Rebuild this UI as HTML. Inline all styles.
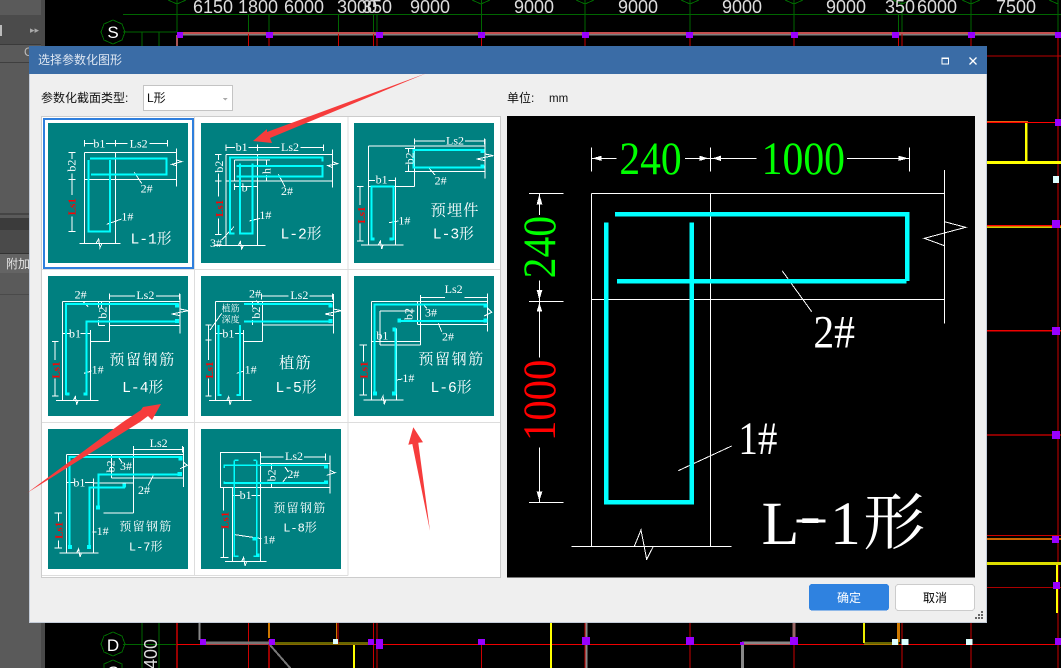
<!DOCTYPE html>
<html><head><meta charset="utf-8"><style>
html,body{margin:0;padding:0;background:#000;width:1061px;height:668px;overflow:hidden}
svg{display:block;position:absolute;left:0;top:0}
text{font-family:"Liberation Sans","Noto Sans CJK SC",sans-serif}
.w{stroke:#fff;stroke-width:3;fill:none}
.c{stroke:#0ff;stroke-width:6;fill:none}
.f{fill:#0ff}
.t{font-family:"Liberation Serif","Noto Serif CJK SC",serif;font-size:36px;fill:#fff;text-anchor:middle}
.r{font-family:"Liberation Serif",serif;font-size:33px;fill:#f00;text-anchor:middle;font-weight:bold}
.n{font-family:"Liberation Mono","Noto Serif CJK SC",monospace;font-size:44px;fill:#fff;text-anchor:middle}
.z{font-family:"Liberation Serif","Noto Serif CJK SC",serif;fill:#fff;text-anchor:middle}
.d{font-size:18px;fill:#ddd}
text.s{font-family:"Liberation Serif","Noto Serif CJK SC",serif;font-size:140px}
</style></head><body>
<svg width="1061" height="668" viewBox="0 0 1061 668" xmlns="http://www.w3.org/2000/svg" shape-rendering="crispEdges">
<!-- background -->
<rect width="1061" height="668" fill="#000"/>
<rect width="41" height="668" fill="#5a5a5a"/>
<rect x="41" width="4" height="668" fill="#4a4a4a"/>
<rect y="15" width="41" height="29" fill="#4b4b4b"/>
<rect y="44" width="41" height="1" fill="#3a3a3a"/>
<rect y="25" width="2" height="11" fill="#bbb"/>
<rect y="62" width="41" height="1" fill="#3f3f3f"/>
<text x="30" y="33" font-size="9" fill="#aaa">▸▸</text>
<text x="24" y="56" font-size="12" fill="#bbb">C</text>
<rect y="213" width="30" height="2" fill="#444"/>
<rect y="218" width="30" height="12" fill="#3b3b3b"/>
<rect y="230" width="30" height="23" fill="#4a4a4a"/>
<rect y="253" width="30" height="1" fill="#333"/>
<rect y="254" width="30" height="19" fill="#646464"/>
<rect y="294" width="30" height="1" fill="#4a4a4a"/>
<text x="6" y="268" font-size="12" fill="#e4e4e4">附加</text>

<!-- top dims -->
<path d="M123 14.5H1061" stroke="#060" stroke-width="1"/>
<path d="M177 0V32M248.500 14V32M269 14V32M338.500 14V32M373.500 14V32M377 14V32M481.500 0V32M585 0V32M690 0V32M794 0V32M898.500 14V32M902 0V32M971 0V32M1058 0V32" stroke="#060" stroke-width="1"/>
<path d="M168 0L177 4L186 0M472 0L481 4L490 0M576 0L585 4L594 0M681 0L690 4L699 0M785 0L794 4L803 0M893 0L902 4L911 0M962 0L971 4L980 0M1049 0L1058 4" stroke="#060" fill="none"/>
<g class="d">
<text x="193" y="13">6150</text><text x="238" y="13">1800</text><text x="284" y="13">6000</text><text x="337" y="13">3000</text><text x="362" y="13">350</text><text x="410" y="13">9000</text><text x="514" y="13">9000</text><text x="618" y="13">9000</text><text x="722" y="13">9000</text><text x="826" y="13">9000</text><text x="885" y="13">350</text><text x="917" y="13">6000</text><text x="996" y="13">7500</text>
</g>
<path d="M123 32H177M142 32V46M159 32V46" stroke="#060" stroke-width="1"/>
<path d="M113 20L122 24L125 32L122 40L113 44L104 40L101 32L104 24Z" stroke="#060" fill="none"/>
<text x="113" y="38" font-size="17" fill="#fff" text-anchor="middle">S</text>
<rect x="177" y="32" width="884" height="2" fill="#c25050"/>
<rect x="177" y="34" width="884" height="1.500" fill="#808080"/>
<rect x="176" y="35" width="2" height="11" fill="#a55"/>
<path d="M248.500 34V46M269 34V46M338.500 34V46M373.500 34V46M377 34V46M481.500 34V46M585 34V46M690 34V46M794 34V46M898.500 34V46M902 34V46M971 34V46M1058 34V668" stroke="#c00" stroke-width="1"/>
<g fill="#90f"><rect x="177" y="32" width="6" height="6"/><rect x="266" y="32" width="7" height="6"/><rect x="376" y="32" width="7" height="6"/><rect x="478" y="32" width="7" height="6"/><rect x="582" y="32" width="7" height="6"/><rect x="686" y="32" width="7" height="6"/><rect x="791" y="32" width="7" height="6"/><rect x="892" y="32" width="7" height="6"/><rect x="968" y="32" width="7" height="6"/><rect x="1055" y="32" width="6" height="6"/></g>

<!-- right side -->
<g>
<rect x="987" y="55.500" width="74" height="1" fill="#b00"/>
<rect x="987" y="121" width="41" height="2" fill="#e5600a"/><rect x="987" y="122" width="74" height="1" fill="#f00"/>
<rect x="1025" y="123" width="2" height="39" fill="#ff0"/><rect x="1027" y="123" width="1" height="39" fill="#770"/>
<rect x="987" y="161" width="74" height="3" fill="#ff0"/>
<rect x="1053" y="176" width="6" height="7" fill="#dff"/>
<rect x="987" y="225" width="74" height="1" fill="#f00"/><rect x="987" y="226" width="74" height="1" fill="#e08000"/><rect x="987" y="227" width="74" height="1" fill="#cc0"/>
<rect x="987" y="330" width="74" height="1.500" fill="#e00"/>
<rect x="987" y="434" width="74" height="2" fill="#800"/>
<rect x="987" y="535" width="74" height="1" fill="#c00"/><rect x="987" y="538" width="74" height="2" fill="#c60"/>
<rect x="987" y="562" width="74" height="3" fill="#dd0"/>
<rect x="1056" y="565" width="2" height="48" fill="#ff0"/>
<rect x="987" y="587" width="74" height="1" fill="#a00"/>
<g fill="#90f"><rect x="1055" y="119" width="6" height="7"/><rect x="1052" y="220" width="8" height="8"/><rect x="1052" y="327" width="8" height="8"/><rect x="1052" y="431" width="8" height="8"/><rect x="1052" y="536" width="7" height="7"/><rect x="1053" y="582" width="7" height="7"/></g>
</g>

<!-- bottom -->
<g>
<path d="M142 622V668M159 622V668M123 644.500H177" stroke="#060" stroke-width="1"/>
<path d="M177 622V668" stroke="#900" stroke-width="2"/>
<path d="M248.500 622V668M373.500 622V668M377 622V668M481.500 644V668M585 622V668M690 622V668M794 644V668M902 622V668M971 622V668" stroke="#c00" stroke-width="1"/>
<path d="M177 644.500H1061" stroke="#e00" stroke-width="1"/>
<path d="M269 640V668" stroke="#900" stroke-width="2"/><path d="M269 622V638" stroke="#c70" stroke-width="2"/>
<path d="M199.500 622V640" stroke="#888" stroke-width="2"/>
<path d="M203 643H269" stroke="#777" stroke-width="3"/>
<path d="M270 645L291 669" stroke="#777" stroke-width="2"/>
<path d="M270 643H368" stroke="#cc0" stroke-width="1"/><path d="M270 644.500H368" stroke="#860" stroke-width="1"/>
<path d="M338 622V644" stroke="#e00" stroke-width="1"/><path d="M336.500 622V640" stroke="#c70" stroke-width="1"/>
<rect x="353" y="645" width="2" height="23" fill="#ff0"/>
<rect x="550" y="622" width="2" height="46" fill="#ff0"/>
<path d="M586.500 622V668" stroke="#888" stroke-width="2"/>
<path d="M742 643H794" stroke="#888" stroke-width="3"/>
<rect x="741" y="644" width="3" height="24" fill="#888"/>
<path d="M794 622V640" stroke="#966" stroke-width="3"/>
<rect x="863" y="622" width="2" height="21" fill="#ee0"/>
<path d="M864 643H899" stroke="#cc0" stroke-width="1"/><path d="M864 644.500H899" stroke="#a70" stroke-width="1"/>
<rect x="897" y="622" width="3" height="20" fill="#c70"/>
<g fill="#dff"><rect x="333" y="639" width="5" height="5"/><rect x="892" y="639" width="6" height="6"/><rect x="901.500" y="639" width="7" height="6"/><rect x="966" y="639" width="6.500" height="6"/></g>
<g fill="#90f"><rect x="200" y="639" width="6" height="6"/><rect x="269" y="639" width="6" height="6"/><rect x="368" y="639" width="6" height="6"/><rect x="376" y="639" width="7" height="10"/><rect x="478" y="639" width="7" height="6"/><rect x="582" y="637" width="8" height="8"/><rect x="686" y="637" width="8" height="8"/><rect x="740" y="642" width="4" height="3"/><rect x="790" y="637" width="8" height="8"/><rect x="1055" y="638" width="6" height="7"/></g>
<path d="M113 632L122 636L125 644L122 652L113 656L104 652L101 644L104 636Z" stroke="#060" fill="none"/>
<text x="113" y="651" font-size="17" fill="#fff" text-anchor="middle">D</text>
<path d="M104 668L104 664L113 660L122 664V668" stroke="#060" fill="none"/>
<text x="113" y="678" font-size="17" fill="#fff" text-anchor="middle">C</text>
<text transform="translate(157,639) rotate(-90)" font-size="18" fill="#ddd" text-anchor="end">9400</text>
</g>

<!-- dialog -->
<rect x="29" y="46" width="958" height="577" fill="#c4ccd8"/>
<rect x="30" y="46" width="956" height="576" fill="#efefef"/>
<rect x="29" y="46" width="958" height="28" fill="#3a6ca6"/>
<text x="38" y="64" font-size="12" fill="#dfe7f2">选择参数化图形</text>
<rect x="942" y="58" width="6.500" height="6" fill="none" stroke="#fff" stroke-width="1"/><rect x="942" y="57.500" width="7" height="1.500" fill="#fff"/>
<path d="M969.500 57.500L976.500 64.500M976.500 57.500L969.500 64.500" stroke="#fff" stroke-width="1.300" shape-rendering="auto"/>

<text x="41" y="102" font-size="12" fill="#111">参数化截面类型:</text>
<rect x="143.500" y="85.500" width="89" height="25" fill="#fff" stroke="#c4c4c4" stroke-width="1"/>
<text x="147" y="102" font-size="12" fill="#111">L形</text>
<path d="M222.500 98H227.500L225 100.500Z" fill="#aaa"/>
<text x="507" y="102" font-size="12" fill="#111">单位:</text>
<text x="549" y="102" font-size="11.500" fill="#111">mm</text>

<!-- grid -->
<rect x="41.500" y="116.500" width="459" height="461" fill="#fff" stroke="#ccc"/>
<path d="M194.500 117V575.500M348 117V575.500M42 269.500H500M42 422.500H500M42 575.500H348" stroke="#ddd" stroke-width="1"/>
<rect x="44" y="119" width="149" height="149" fill="none" stroke="#2f7fdd" stroke-width="2"/>
<g fill="#008080">
<rect x="48" y="123" width="140" height="140"/><rect x="201" y="123" width="140" height="140"/><rect x="354" y="123" width="140" height="140"/>
<rect x="48" y="276" width="140" height="140"/><rect x="201" y="276" width="140" height="140"/><rect x="354" y="276" width="140" height="140"/>
<rect x="48" y="429" width="140" height="140"/><rect x="201" y="429" width="140" height="140"/>
</g>

<!-- L-1 & L-2 -->
<g transform="translate(40,115) scale(.33333)">
<path class="w" d="M133 75V95M227 75V95M383 75V95M133 85H160M198 85H262M328 85H383M133 112H410M133 193H410M133 112V385M227 112V385M410 100V215M118 385H242M168 385L176 372L180 398L186 385M410 135L425 140L395 148L410 152M85 112H107M85 193H107M85 350H107M96 112V132M96 175V240M96 305V350M283 172L305 205M200 328L245 312"/>
<path class="c" d="M150 130H380V178H153M145 135V350H210V135"/>
<text class="t" x="178" y="97">b1</text><text class="t" x="296" y="97">Ls2</text>
<text class="t" transform="translate(107,152) rotate(-90)">b2</text>
<text class="r" transform="translate(107,275) rotate(-90)">Ls1</text>
<text class="t" x="320" y="232">2#</text><text class="t" x="262" y="316">1#</text>
<text class="n" x="333" y="386">L-1形</text>

<path class="w" d="M558 88V108M652 88V108M850 88V108M558 98H585M625 98H718M782 98H850M558 118H878M558 198H878M558 118V392M652 118V392M878 103V218M520 392H676M595 392L601 380L605 402L610 392M583 135H690M583 135V198M878 140L893 146L863 152L878 158M525 118H545M525 198H545M525 358H545M535 118V135M535 175V245M535 310V358M583 215H652M583 205V225M652 205V225M670 135H690M670 198H690M680 135V155M680 180V198M582 335L545 375M715 178L735 215M628 318L660 310"/>
<path class="c" d="M583 355H570V128H848V140M590 153H848V185H590M600 145V355H637V145"/>
<text class="t" x="605" y="108">b1</text><text class="t" x="750" y="108">Ls2</text>
<text class="t" transform="translate(549,155) rotate(-90)">b2</text>
<text class="r" transform="translate(549,280) rotate(-90)">Ls1</text>
<text class="t" x="614" y="229">b</text>
<text class="t" transform="translate(691,168) rotate(-90)">h</text>
<text class="t" x="528" y="396">3#</text><text class="t" x="741" y="240">2#</text><text class="t" x="676" y="312">1#</text>
<text class="n" x="783" y="371">L-2形</text>
</g>

<!-- L-3 & L-6 -->
<g transform="translate(345,115) scale(.33333)">
<path class="w" d="M208 70V88M418 70V88M208 78H300M360 78H418M70 93H420M70 93V390M208 93V215M70 215H208M208 170H420M420 72V190M152 195V390M48 390H175M100 390L106 378L110 402L114 390M70 197H90M130 197H152M70 187V207M152 187V207M180 100H208M180 170H208M190 100V112M190 148V170M420 117L445 122L395 132L420 137M36 215H55M36 378H55M45 215V270M45 325V378M250 157L270 180M132 323L160 318"/>
<path class="c" d="M415 112V105H206V157H415V152M80 375V215H146V375"/>
<g class="f"><rect x="407" y="102" width="10" height="12"/><rect x="407" y="148" width="10" height="12"/><rect x="77" y="367" width="12" height="10"/><rect x="133" y="367" width="12" height="10"/></g>
<text class="t" x="330" y="88">Ls2</text><text class="t" x="110" y="206">b1</text>
<text class="t" transform="translate(205,130) rotate(-90)">b2</text>
<text class="r" transform="translate(60,300) rotate(-90)">Ls1</text>
<text class="t" x="287" y="208">2#</text><text class="t" x="178" y="328">1#</text>
<text class="z" x="330" y="302" font-size="46" letter-spacing="3">预埋件</text>
<text class="n" x="325" y="370">L-3形</text>

<path class="w" d="M227 540V690M428 535V650M227 548H300M358 548H428M80 560H428M80 560V855M218 560V628M218 628H428M105 588H208M105 588V690M80 680H227M105 690H227M155 640V855M55 855H175M108 855L114 843L118 868L122 855M428 580L440 592L418 603M44 690H66M44 840H66M55 690V740M55 790V840M235 568L245 580M280 625L290 650M155 795L172 792"/>
<path class="c" d="M88 838V568H425M165 618H425M148 645H152V838"/>
<g class="f"><rect x="415" y="565" width="12" height="12"/><rect x="415" y="610" width="12" height="12"/><rect x="158" y="610" width="10" height="12"/><rect x="84" y="830" width="12" height="12"/><rect x="141" y="830" width="12" height="12"/><rect x="143" y="638" width="10" height="12"/></g>
<text class="t" x="326" y="534">Ls2</text><text class="t" x="112" y="673">b1</text>
<text class="t" transform="translate(202,597) rotate(-90)">b2</text>
<text class="t" x="258" y="605">3#</text><text class="t" x="309" y="677">2#</text><text class="t" x="190" y="801">1#</text>
<text class="r" transform="translate(68,765) rotate(-90)">Ls1</text>
<text class="z" x="320" y="747" font-size="45" letter-spacing="5">预留钢筋</text>
<text class="n" x="318" y="831">L-6形</text>
</g>

<!-- L-4 & L-5 -->
<g transform="translate(40,270) scale(.33333)">
<path class="w" d="M208 70V88M418 70V88M208 78H285M348 78H418M68 95H420M68 95V390M208 95V215M150 215H208M208 167H420M420 72V190M152 190V390M48 392H175M100 392L106 380L110 404L114 392M68 190H90M122 190H152M68 180V200M152 180V200M175 95V112M175 150V167M185 95V112M175 167H195M420 117L445 122L395 132L420 137M36 215H55M36 378H55M45 215V270M45 325V378M130 95L145 110M132 310L155 303"/>
<path class="c" d="M415 102H78V375M415 155H140V375"/>
<g class="f"><rect x="405" y="100" width="12" height="12"/><rect x="405" y="147" width="12" height="12"/><rect x="76" y="367" width="12" height="10"/><rect x="130" y="367" width="12" height="10"/></g>
<text class="t" x="122" y="86">2#</text><text class="t" x="316" y="87">Ls2</text><text class="t" x="105" y="202">b1</text>
<text class="t" transform="translate(200,128) rotate(-90)">b2</text>
<text class="r" transform="translate(59,300) rotate(-90)">Ls1</text>
<text class="t" x="173" y="311">1#</text>
<text class="z" x="308" y="283" font-size="45" letter-spacing="5">预留钢筋</text>
<text class="n" x="308" y="366">L-4形</text>

<path class="w" d="M665 70V88M878 70V88M665 78H745M808 78H878M527 95H880M527 95V390M667 95V215M610 215H667M667 165H880M880 72V190M610 190V390M507 392H635M560 392L566 380L570 404L574 392M527 190H548M585 190H610M527 180V200M610 180V200M638 95V112M638 150V165M880 117L905 122L855 132L880 137M496 165H515M496 210H515M496 378H515M505 165V270M505 325V378M510 180L545 130M590 310L612 303M648 92L662 105"/>
<path class="c" d="M612 102H875M612 155H875M535 165V375H545M600 165V375H590"/>
<g class="f"><rect x="865" y="100" width="12" height="12"/><rect x="865" y="147" width="12" height="12"/></g>
<text class="t" x="645" y="82">2#</text><text class="t" x="778" y="87">Ls2</text><text class="t" x="565" y="202">b1</text>
<text class="t" x="572" y="124" style="font-size:27px">植筋</text><text class="t" x="572" y="157" style="font-size:27px">深度</text>
<text class="t" transform="translate(660,128) rotate(-90)">b2</text>
<text class="r" transform="translate(519,300) rotate(-90)">Ls1</text>
<text class="t" x="632" y="311">1#</text>
<text class="z" x="766" y="294" font-size="46" letter-spacing="3">植筋</text>
<text class="n" x="768" y="366">L-5形</text>
</g>

<!-- L-7 & L-8 -->
<g transform="translate(40,422) scale(.33333)">
<path class="w" d="M280 72V273M428 72V92M280 83H428M80 97H430M80 97V393M430 75V195M215 97V168M215 168H430M160 183H280M190 273H280M160 170V393M58 393H175M110 393L116 381L120 405L124 393M80 182H103M135 182H160M430 120L442 130L420 140M44 273H66M44 378H66M55 273V298M55 355V378M235 105L245 120M340 160L325 190M158 330H170"/>
<path class="c" d="M425 105H88V375M425 157H175V260M255 197H148V375"/>
<g class="f"><rect x="415" y="102" width="12" height="14"/><rect x="412" y="150" width="14" height="12"/><rect x="84" y="369" width="12" height="12"/><rect x="141" y="369" width="12" height="12"/><rect x="168" y="251" width="12" height="12"/><rect x="248" y="184" width="10" height="12"/></g>
<text class="t" x="356" y="75">Ls2</text><text class="t" x="118" y="193">b1</text>
<text class="t" transform="translate(224,133) rotate(-90)">b2</text>
<text class="t" x="258" y="144">3#</text><text class="t" x="312" y="216">2#</text><text class="t" x="188" y="339">1#</text>
<text class="r" transform="translate(68,325) rotate(-90)">Ls1</text>
<text class="z" x="318" y="326" font-size="36" letter-spacing="4">预留钢筋</text>
<text class="n" x="317" y="386" style="font-size:36px">L-7形</text>

<path class="w" d="M541 91H661V197H541ZM661 125H870M661 197H870M870 100V215M661 95V115M857 95V115M661 105H730M792 105H857M577 197V418M661 197V418M555 418H680M605 418L611 406L615 432L620 418M577 220H600M635 220H661M684 125H705M684 197H705M695 125V142M695 180V197M870 145L885 152L860 160M541 407H565M550 197V265M550 320V407M735 135L745 150M725 185L740 165M585 338L665 350"/>
<path class="c" d="M553 138V130H860V138M553 178V183H860V178M583 115V403H595M650 115V403H640M583 115H595M650 115H640" style="stroke-width:5"/>
<g class="f"><rect x="852" y="127" width="12" height="12"/><rect x="852" y="176" width="12" height="10"/><rect x="648" y="395" width="10" height="10"/><rect x="638" y="345" width="14" height="10"/></g>
<text class="t" x="617" y="231">b1</text><text class="t" x="762" y="114">Ls2</text>
<text class="t" transform="translate(707,160) rotate(-90)">b2</text>
<text class="t" x="760" y="168">2#</text><text class="t" x="687" y="364">1#</text>
<text class="r" transform="translate(566,295) rotate(-90)">Ls1</text>
<text class="z" x="780" y="270" font-size="36" letter-spacing="4">预留钢筋</text>
<text class="n" x="780" y="328" style="font-size:36px">L-8形</text>
</g>

<!-- preview -->
<g transform="translate(505,115) scale(.33333)">
<rect x="6" y="3" width="1404" height="1385" fill="#000"/>
<path class="w" d="M259 235V1294M616 235V1294M1318 165V625M259 235H1318M259 553H1318M200 1294H680M388 1294L408 1245L425 1333L445 1294M1318 320L1382 337L1258 370L1318 392M259 98V170M616 98V170M1214 98V170M259 130H335M540 130H616M616 130H755M1026 130H1214M72 235H176M72 559H176M72 1162H176M103 235V300M103 497V559M103 559V728M103 998V1162M832 468L920 590M520 1067L680 993"/>
<g fill="#fff"><path d="M262 130L290 122V138ZM610 130L583 122V138ZM622 130L648 122V138ZM1210 130L1180 122V138ZM103 238L95 268H112ZM103 555L95 525H112ZM103 563L95 590H112ZM103 1158L95 1130H112Z"/></g>
<path d="M330 298H1207V498M336 499H1205" stroke="#0ff" stroke-width="14" fill="none"/>
<path d="M304 323V1162H560V323" stroke="#0ff" stroke-width="14" fill="none"/>
<text class="s" x="343" y="177" fill="#0f0" textLength="187" lengthAdjust="spacingAndGlyphs">240</text>
<text class="s" x="770" y="177" fill="#0f0" textLength="250" lengthAdjust="spacingAndGlyphs">1000</text>
<text class="s" transform="translate(150,490) rotate(-90)" fill="#0f0" textLength="187" lengthAdjust="spacingAndGlyphs">240</text>
<text class="s" transform="translate(150,978) rotate(-90)" fill="#f00" textLength="244" lengthAdjust="spacingAndGlyphs">1000</text>
<text class="s" x="925" y="697" fill="#fff" textLength="125" lengthAdjust="spacingAndGlyphs">2#</text>
<text class="s" x="700" y="1017" fill="#fff" textLength="117" lengthAdjust="spacingAndGlyphs">1#</text>
<text class="s" x="770 885 975 1075" y="1287 1260 1287 1287" style="font-size:185px" fill="#fff">L-1形</text>
<rect x="875" y="1214" width="87" height="9" fill="#fff"/>
</g>

<!-- buttons -->
<rect x="809" y="584" width="80" height="26.500" rx="3" fill="#2f82e0"/>
<text x="849" y="602" font-size="12" fill="#fff" text-anchor="middle">确定</text>
<rect x="895.500" y="584.500" width="79" height="26" rx="3" fill="#fff" stroke="#ccc"/>
<text x="935" y="602" font-size="12" fill="#000" text-anchor="middle">取消</text>
<g fill="#666"><rect x="981" y="611" width="2" height="2"/><rect x="978" y="614" width="2" height="2"/><rect x="981" y="614" width="2" height="2"/><rect x="975" y="617" width="2" height="2"/><rect x="978" y="617" width="2" height="2"/><rect x="981" y="617" width="2" height="2"/></g>

<!-- red arrows -->
<g fill="#f63c3c" shape-rendering="auto">
<path d="M427 73L270 138L272 143L253 141L267 129L267 132Z"/>
<path d="M27 493L123 422L141 410L143 407L161 404L152 420L148 416L140 422Z"/>
<path d="M430 531L418.300 442.700L423 442.300L413.300 427.300L408.300 444.700L412.300 444Z"/>
</g>
</svg>
</body></html>
